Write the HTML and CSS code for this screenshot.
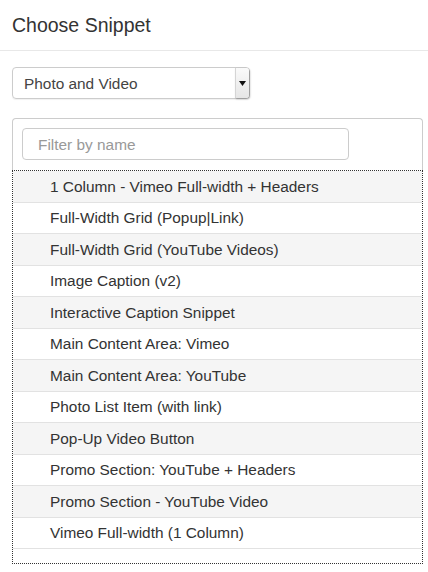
FILE: index.html
```html
<!DOCTYPE html>
<html>
<head>
<meta charset="utf-8">
<link rel="stylesheet" href="styles.css">
</head>
<body>
<div class="header"><h1 class="title">Choose Snippet</h1></div>
<div class="content">
  <div class="select">
    <span class="select-text">Photo and Video</span>
    <span class="select-arrow"><svg width="7" height="5" viewBox="0 0 7 5"><path d="M0 0H7L3.5 5Z" fill="#111"/></svg></span>
  </div>
  <div class="panel">
    <div class="filter-wrap">
      <input class="filter" type="text" placeholder="Filter by name">
    </div>
    <ul class="list">
      <li class="row">1 Column - Vimeo Full-width + Headers</li>
      <li class="row">Full-Width Grid (Popup|Link)</li>
      <li class="row">Full-Width Grid (YouTube Videos)</li>
      <li class="row">Image Caption (v2)</li>
      <li class="row">Interactive Caption Snippet</li>
      <li class="row">Main Content Area: Vimeo</li>
      <li class="row">Main Content Area: YouTube</li>
      <li class="row">Photo List Item (with link)</li>
      <li class="row">Pop-Up Video Button</li>
      <li class="row">Promo Section: YouTube + Headers</li>
      <li class="row">Promo Section - YouTube Video</li>
      <li class="row">Vimeo Full-width (1 Column)</li>
    </ul>
  </div>
</div>
</body>
</html>
```
FILE: styles.css
```css
* { box-sizing: border-box; }
html, body { margin: 0; padding: 0; background: #fff; }
body { font-family: "Liberation Sans", Arial, sans-serif; color: #333; }
.header {
  height: 51px;
  border-bottom: 1px solid #e8e8e8;
  padding: 13px 12px 0;
}
.title {
  margin: 0;
  font-size: 19.5px;
  font-weight: normal;
  line-height: 24px;
  color: #333;
}
.content { padding: 16px 5px 0 12px; }
.select {
  width: 238px;
  height: 32px;
  border: 1px solid #ccc;
  border-radius: 4px;
  display: flex;
  align-items: center;
  justify-content: space-between;
  padding-left: 11px;
  box-shadow: 0 1px 1px rgba(0,0,0,0.06);
}
.select-text { font-size: 15.4px; color: #444; padding-top: 1px; }
.select-arrow {
  width: 14px;
  height: 30px;
  display: flex;
  align-items: center;
  justify-content: center;
  background: linear-gradient(#fafafa, #e6e6e6);
  border-left: 1px solid #d5d5d5;
  border-radius: 0 3px 3px 0;
  box-shadow: 1px 1px 2px rgba(0,0,0,0.3);
}
.panel { margin-top: 19px; width: 411px; }
.filter-wrap {
  border: 1px solid #ccc;
  border-bottom: none;
  border-radius: 4px 4px 0 0;
  padding: 9px 9px 10px;
}
.filter {
  display: block;
  width: 327px;
  height: 32px;
  border: 1px solid #ccc;
  border-radius: 4px;
  padding: 1px 15px 0;
  font-family: "Liberation Sans", Arial, sans-serif;
  font-size: 15.4px;
  color: #333;
  outline: none;
}
.filter::placeholder { color: #999; }
.list {
  list-style: none;
  margin: 0;
  padding: 0 0 14px;
  border: 1px dotted #333;
}
.row {
  height: 31.5px;
  border-bottom: 1px solid #e2e2e2;
  padding: 1px 0 0 37px;
  display: flex;
  align-items: center;
  font-size: 15.4px;
  color: #333;
}
.row:nth-child(odd) { background: #f5f5f5; }
```
